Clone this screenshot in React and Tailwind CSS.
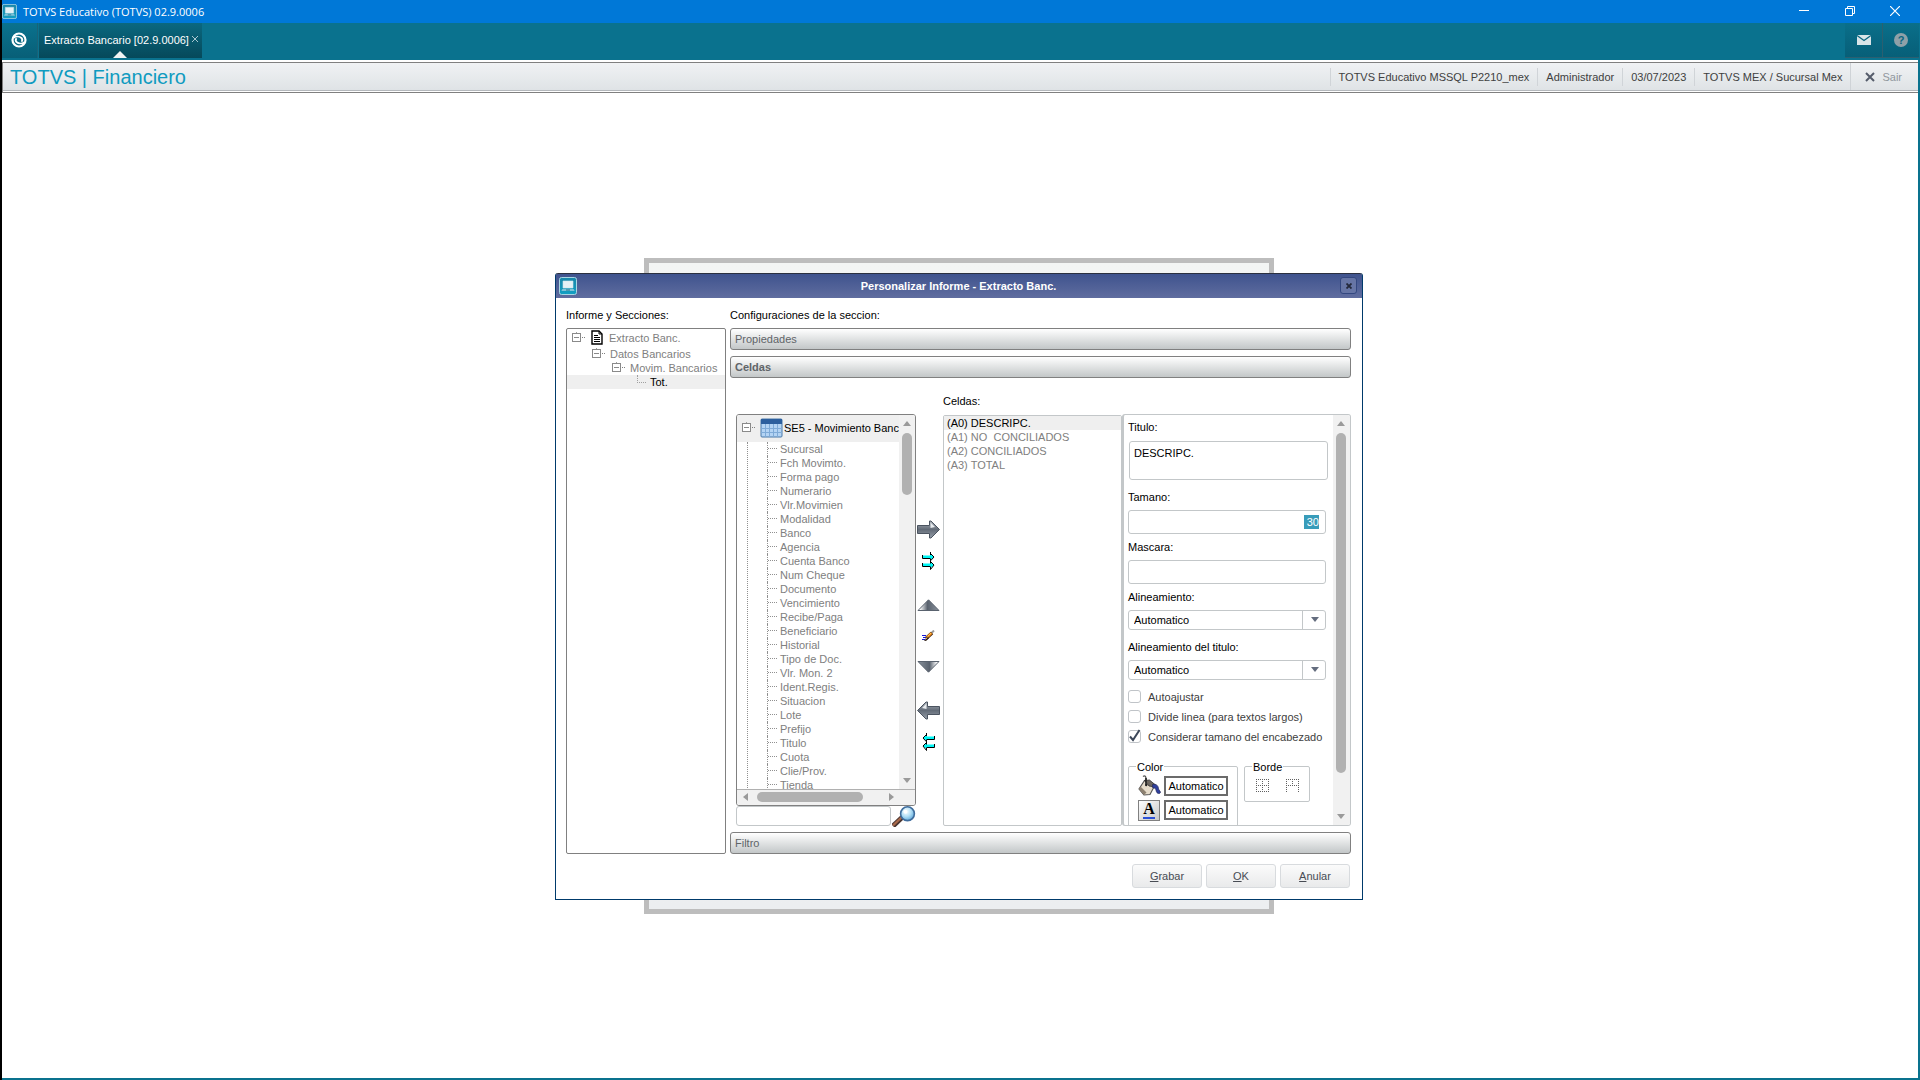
import React, { useState } from 'react'

const FIELDS = [
  'Sucursal', 'Fch Movimto.', 'Forma pago', 'Numerario', 'Vlr.Movimien', 'Modalidad', 'Banco', 'Agencia',
  'Cuenta Banco', 'Num Cheque', 'Documento', 'Vencimiento', 'Recibe/Paga', 'Beneficiario', 'Historial',
  'Tipo de Doc.', 'Vlr. Mon. 2', 'Ident.Regis.', 'Situacion', 'Lote', 'Prefijo', 'Titulo', 'Cuota',
  'Clie/Prov.', 'Tienda',
]

const CELLS = ['(A0) DESCRIPC.', '(A1) NO  CONCILIADOS', '(A2) CONCILIADOS', '(A3) TOTAL']

function AppIcon({ className }) {
  return (
    <svg viewBox="0 0 18 18" className={className} aria-hidden="true">
      <defs>
        <linearGradient id="app-bg" x1="0" y1="0" x2="0" y2="1">
          <stop offset="0" stopColor="#1a86a8" />
          <stop offset="1" stopColor="#12a0c4" />
        </linearGradient>
      </defs>
      <rect x="0.5" y="0.5" width="17" height="17" rx="2" fill="url(#app-bg)" stroke="#a9d6e3" />
      <path d="M4 4h10v7H4z" fill="#e4f1f6" stroke="#cfe6ee" strokeWidth="0.6" />
      <path d="M3.4 12h11.2l1 2H2.4z" fill="#7fc3d8" />
      <path d="M7 13h4" stroke="#0b5f7a" strokeWidth="0.8" />
    </svg>
  )
}

function Expander() {
  return (
    <svg width="14" height="14" viewBox="0 0 14 14" className="shrink-0" shapeRendering="crispEdges" aria-hidden="true">
      <path d="M4.5 1v1" stroke="#a0a0a0" />
      <rect x="0.5" y="2.5" width="8" height="8" fill="#fff" stroke="#8a8a8a" />
      <path d="M2 6.5h5" stroke="#8a8a8a" />
      <path d="M10 6.5h4" stroke="#808080" strokeDasharray="1 1" />
    </svg>
  )
}

function Triangle({ dir, color = '#9a9a9a' }) {
  const shapes = {
    up: 'M0 6h8L4 1z',
    down: 'M0 1h8L4 6z',
    left: 'M6 0v8L1 4z',
    right: 'M1 0v8L6 4z',
  }
  return (
    <svg width="8" height="8" viewBox="0 0 8 8" aria-hidden="true">
      <path d={shapes[dir]} fill={color} />
    </svg>
  )
}

function BigArrow({ flip }) {
  return (
    <svg width="23" height="19" viewBox="0 0 23 19" className={flip ? '-scale-x-100' : ''} aria-hidden="true">
      <defs>
        <linearGradient id="steel" x1="0" y1="0" x2="0" y2="1">
          <stop offset="0" stopColor="#a9b0b8" />
          <stop offset="0.5" stopColor="#626b77" />
          <stop offset="1" stopColor="#949ca6" />
        </linearGradient>
      </defs>
      <path d="M0.5 5.5h12v-4.5h1.5l8.5 8.5-8.5 8.5h-1.5v-4.5h-12z" fill="url(#steel)" stroke="#4b5460" />
      <path d="M13.5 2.5l4.5 4.5-4.5 1z" fill="#e8ebee" />
    </svg>
  )
}

function WideTriangle({ flip }) {
  return (
    <svg width="23" height="12" viewBox="0 0 23 12" className={flip ? 'rotate-180' : ''} aria-hidden="true">
      <defs>
        <linearGradient id="tri" x1="0" y1="0" x2="1" y2="0">
          <stop offset="0.1" stopColor="#ffffff" />
          <stop offset="0.45" stopColor="#59626e" />
          <stop offset="1" stopColor="#8a929c" />
        </linearGradient>
      </defs>
      <path d="M1 11.5L11.5 0.8 22 11.5z" fill="url(#tri)" stroke="#59626e" />
    </svg>
  )
}

function DoubleArrow({ flip }) {
  return (
    <svg width="13" height="18" viewBox="0 0 13 18" className={flip ? '-scale-x-100' : ''} aria-hidden="true">
      <path d="M0 3.500h8V1.500l4 3.500-4 3.500V6H0z" fill="#00f5f5" />
      <path d="M0.500 3v3.500H8M8.500 0v3M8.500 1.500L12 5 8.500 8.800V6.500" fill="none" stroke="#000" />
      <path d="M0 11.500h8v-2l4 3.500-4 3.500V14H0z" fill="#00f5f5" />
      <path d="M0.500 11v3.500H8M8.500 9v2.500M8.500 9.500L12 13l-3.500 4.500v-3" fill="none" stroke="#000" />
    </svg>
  )
}

function Brush() {
  return (
    <svg width="13" height="12" viewBox="0 0 13 12" aria-hidden="true">
      <path d="M9 3.5L12 0.5" stroke="#9a9a9a" strokeWidth="2" />
      <path d="M4 8.5L10 3" stroke="#4a2a10" strokeWidth="3.6" />
      <path d="M4.5 8L9.5 3" stroke="#f08a18" strokeWidth="2.4" />
      <path d="M5 7L9 3" stroke="#ffd060" strokeWidth="0.8" />
      <path d="M0 5.5h4M1 7.5h3M0 9.5h3" stroke="#1616d8" strokeWidth="1" />
      <path d="M2 10.5L5.5 6.5l1.500 1.500-3 3z" fill="#2a1a10" />
      <path d="M3.5 9.5l2-2" stroke="#f0c080" strokeWidth="0.8" />
    </svg>
  )
}

function Magnifier() {
  return (
    <svg width="24" height="21" viewBox="0 0 24 21" aria-hidden="true">
      <defs>
        <radialGradient id="lens" cx="0.4" cy="0.35" r="0.7">
          <stop offset="0" stopColor="#ffffff" />
          <stop offset="0.5" stopColor="#b4e0f6" />
          <stop offset="1" stopColor="#5aa6d8" />
        </radialGradient>
      </defs>
      <path d="M10.5 11L1 20" stroke="#4a3430" strokeWidth="5" />
      <path d="M10 11L1 19.5" stroke="#a86a4c" strokeWidth="2.4" />
      <circle cx="15.5" cy="7.7" r="6.9" fill="url(#lens)" stroke="#3f6c9c" strokeWidth="1.6" />
      <circle cx="13.4" cy="5.8" r="2" fill="#fff" />
    </svg>
  )
}

function Bucket() {
  return (
    <svg width="24" height="22" viewBox="0 0 24 22" aria-hidden="true">
      <path d="M5 1.5c2-1.5 3 0 3 2v6" fill="none" stroke="#555" strokeWidth="1.3" />
      <path d="M6.5 5.5L17 10l-5 9.5-6 0.5L1 14z" fill="#e6dccb" stroke="#555" strokeWidth="1.1" />
      <path d="M6 20L1 14l1.5-2.500 6 6z" fill="#8d8171" />
      <path d="M6.5 5.5l5-0.500 6 5-1 2L11 11z" fill="#6d6760" stroke="#333" strokeWidth="0.8" />
      <path d="M8 3v6.5" stroke="#222" strokeWidth="1.6" />
      <circle cx="8.2" cy="10" r="1.2" fill="#222" />
      <path d="M14.5 9.5c4-1 6 1.500 6 4.500l2 3c0 2-3 2-4 0l-1-3.500-3-1z" fill="#2e3f9e" stroke="#2a2d5a" strokeWidth="0.7" />
    </svg>
  )
}

function BorderGrid({ partial }) {
  return (
    <svg width="13" height="13" viewBox="0 0 13 13" shapeRendering="crispEdges" aria-hidden="true">
      <path
        d={partial ? 'M0 0.5h13M0 6.5h13M0.5 0v13M6.5 0v8M12.5 0v13' : 'M0 0.5h13M0 6.5h13M0 12.5h13M0.5 0v13M6.5 0v13M12.5 0v13'}
        fill="none"
        stroke="#606060"
        strokeDasharray="1 1"
      />
    </svg>
  )
}

function VScroll({ thumb }) {
  return (
    <div className="flex w-4 shrink-0 flex-col items-center bg-[#f1f1f1]">
      <div className="flex h-[18px] items-center"><Triangle dir="up" /></div>
      <div className={`w-[10px] rounded-full bg-[#b1b1b1] ${thumb}`} />
      <div className="mt-auto flex h-4 items-center"><Triangle dir="down" /></div>
    </div>
  )
}

function Bar({ children, bold }) {
  return (
    <button
      className={`h-[22px] w-full shrink-0 rounded-[3px] border border-[#808080] bg-gradient-to-b from-white to-[#c3c7c8] px-1 text-left text-[#606468] ${bold ? 'font-bold' : ''}`}
    >
      {children}
    </button>
  )
}

function Combo({ id, label }) {
  return (
    <div className="mb-[10px]">
      <label htmlFor={id} className="mb-[6px] block">{label}</label>
      <div className="relative h-5 w-[198px]">
        <select id={id} className="h-full w-full appearance-none rounded-[3px] border border-[#c3c7c9] bg-white px-[5px] text-black outline-none">
          <option>Automatico</option>
        </select>
        <span className="pointer-events-none absolute inset-y-0 right-0 flex w-6 items-center justify-center border-l border-[#c3c7c9]">
          <Triangle dir="down" color="#646d7e" />
        </span>
      </div>
    </div>
  )
}

function Check({ label, defaultChecked }) {
  return (
    <label className="flex h-5 items-center gap-[7px] text-[#404040]">
      <span className="relative h-[13px] w-[13px]">
        <input type="checkbox" defaultChecked={defaultChecked} className="peer block h-full w-full appearance-none rounded-[3px] border border-[#c0c4c8] bg-white" />
        <svg viewBox="0 0 13 13" className="pointer-events-none absolute inset-0 hidden overflow-visible peer-checked:block" aria-hidden="true">
          <path d="M2 6.5L5 10 11.5 0" fill="none" stroke="#3c4759" strokeWidth="2" />
        </svg>
      </span>
      {label}
    </label>
  )
}

function TitleBar() {
  return (
    <header className="flex h-[23px] items-center bg-[#0078d7] text-white">
      <AppIcon className="h-[15px] w-[15px]" />
      <h1 className="ml-[6px] font-['Open_Sans',sans-serif] text-[11px]">TOTVS Educativo (TOTVS) 02.9.0006</h1>
      <div className="ml-auto flex h-full pr-[2px] pb-[2px]">
        <button aria-label="Minimizar" className="flex w-[46px] items-center justify-center">
          <svg width="10" height="10" viewBox="0 0 10 10"><path d="M0 4.5h10" stroke="#fff" /></svg>
        </button>
        <button aria-label="Restaurar" className="flex w-[45px] items-center justify-center">
          <svg width="10" height="10" viewBox="0 0 10 10" fill="none" stroke="#fff"><path d="M0.5 2.5h7v7h-7zM2.5 2.5v-2h7v7h-2" /></svg>
        </button>
        <button aria-label="Cerrar" className="flex w-[46px] items-center justify-center">
          <svg width="10" height="10" viewBox="0 0 10 10"><path d="M0 0l10 10M10 0L0 10" stroke="#fff" strokeWidth="1.2" /></svg>
        </button>
      </div>
    </header>
  )
}

function Toolbar() {
  return (
    <nav className="flex h-[37px] bg-[#0a728e] pb-[2px] text-white">
      <button aria-label="Inicio" className="flex w-[36px] items-center justify-center border-r border-[#1a6277] bg-gradient-to-b from-[#0a728e] to-[#085f77] pr-[2px] pb-[2px]">
        <svg width="16" height="16" viewBox="0 0 16 16" fill="none" stroke="#fff" aria-hidden="true">
          <circle cx="8" cy="8" r="6.5" strokeWidth="2.2" />
          <path d="M2.5 5.8C5 4 8.500 4.200 10.500 6c1 1 1 2.500 0 3.800" strokeWidth="1.800" />
          <path d="M13.500 10.200C11 12 7.500 11.800 5.500 10c-1-1-1-2.500 0-3.800" strokeWidth="1.800" />
        </svg>
      </button>
      <div className="relative ml-[1px] flex w-[163px] items-center bg-gradient-to-b from-[#0a6880] to-[#06495a] pb-[2px] pl-[5px]">
        <a href="#extracto">Extracto Bancario [02.9.0006]</a>
        <button aria-label="Cerrar pestaña" className="ml-[3px] pb-[2px]">
          <svg width="6" height="6" viewBox="0 0 6 6"><path d="M0 0l6 6M6 0L0 6" stroke="#a9c8d1" /></svg>
        </button>
        <svg width="14" height="7" viewBox="0 0 14 7" className="absolute bottom-0 left-[74px]" aria-hidden="true">
          <path d="M7 0l7 7H0z" fill="#f2f4f5" />
        </svg>
      </div>
      <div className="ml-auto flex pr-px">
        <button aria-label="Mensajes" className="flex w-[38px] items-center justify-center border-r border-b border-[#2b5f70] bg-gradient-to-b from-[#0a6f8a] to-[#075f78]">
          <svg width="14" height="10" viewBox="0 0 14 10" aria-hidden="true">
            <path d="M0 0h14v10H0z" fill="#d9e4e8" />
            <path d="M0 0.5l7 5 7-5" fill="none" stroke="#0a6680" strokeWidth="1.3" />
          </svg>
        </button>
        <button aria-label="Ayuda" className="flex w-[36px] items-center justify-center border-b border-[#2b5f70] bg-gradient-to-b from-[#0a6f8a] to-[#075f78]">
          <span className="flex h-[14px] w-[14px] items-center justify-center rounded-full bg-[#8fa0a8] font-bold text-[#0a6680]">?</span>
        </button>
      </div>
    </nav>
  )
}

function InfoBar() {
  const info = ['TOTVS Educativo MSSQL P2210_mex', 'Administrador', '03/07/2023', 'TOTVS MEX / Sucursal Mex']
  return (
    <div className="mt-[2px] border border-r-0 border-[#808080] bg-white pb-px">
      <div className="flex h-7 items-center border-b border-[#b4b8bc] bg-gradient-to-b from-[#f0f2f4] to-[#dfe3e6]">
        <h2 className="ml-[7px] text-xl leading-7 text-[#0f9bc0]">TOTVS | Financiero</h2>
        <ul className="ml-auto flex h-[18px] text-[#404040]">
          {info.map((text) => (
            <li key={text} className="flex items-center border-l border-[#d0d4d8] px-2">{text}</li>
          ))}
        </ul>
        <button className="flex h-full items-center gap-[7px] border-l border-[#cfd3d7] pr-4 pl-[14px] text-[#90979e]">
          <svg width="10" height="10" viewBox="0 0 10 10" aria-hidden="true"><path d="M1 1l8 8M9 1L1 9" stroke="#555c6b" strokeWidth="2" /></svg>
          Sair
        </button>
      </div>
    </div>
  )
}

function SectionTree() {
  return (
    <div className="flex w-[160px] flex-col">
      <p className="mb-[6px]">Informe y Secciones:</p>
      <ul className="flex-1 rounded-[2px] border border-[#808080] text-[#808080]">
        <li className="flex h-[18px] items-center pl-[5px]">
          <Expander />
          <svg width="12" height="15" viewBox="0 0 12 15" className="ml-[5px]" aria-hidden="true">
            <path d="M1 1h7l3 3v10H1z" fill="#fff" stroke="#000" strokeWidth="1.4" />
            <path d="M8 1v3h3" fill="none" stroke="#000" />
            <path d="M3 5.5h4M3 7.5h6M3 9.5h6M3 11.5h6" stroke="#000" />
          </svg>
          <span className="ml-[6px]">Extracto Banc.</span>
        </li>
        <li className="flex h-[14px] items-center gap-1 pl-[25px]"><Expander />Datos Bancarios</li>
        <li className="flex h-[14px] items-center gap-1 pl-[45px]"><Expander />Movim. Bancarios</li>
        <li className="flex h-[14px] items-center bg-[#efefef] pl-[70px] text-black">
          <span className="mr-1 mb-[6px] h-[8px] w-[9px] border-b border-l border-dotted border-[#a0a0a0]" />
          Tot.
        </li>
      </ul>
    </div>
  )
}

function FieldTree() {
  return (
    <div className="w-[180px] pt-9">
      <div className="h-[392px] overflow-hidden rounded-[3px] border border-[#808080]">
        <div className="flex h-[374px]">
          <div className="min-w-0 flex-1 overflow-hidden">
            <div className="flex h-[27px] items-center bg-[#efefef] pl-[5px] whitespace-nowrap">
              <Expander />
              <svg width="23" height="20" viewBox="0 0 23 20" className="ml-[4px] shrink-0" aria-hidden="true">
                <rect x="1" y="1" width="21" height="18" rx="1" fill="#b4d4f4" stroke="#4878a8" />
                <rect x="1" y="1" width="21" height="5" fill="#2c5f9e" />
                <path d="M1 10.5h21M1 14.5h21M5.5 6v13M9.5 6v13M13.5 6v13M17.5 6v13" stroke="#7fabd8" />
              </svg>
              <span className="ml-px">SE5 - Movimiento Banc</span>
            </div>
            <ul className="ml-[10px] border-l border-dotted border-[#909090] pl-[19px] text-[#808080]">
              {FIELDS.map((field) => (
                <li key={field} className="flex h-[14px] items-center border-l border-dotted border-[#909090]">
                  <span className="mr-[3px] w-[9px] border-t border-dotted border-[#909090]" />
                  {field}
                </li>
              ))}
            </ul>
          </div>
          <VScroll thumb="h-[62px]" />
        </div>
        <div className="flex h-4 items-center border-t border-[#b0b0b0] bg-[#f1f1f1]">
          <div className="flex w-5 justify-center pr-[2px]"><Triangle dir="left" /></div>
          <div className="h-[10px] w-[106px] rounded-full bg-[#b1b1b1]" />
          <div className="mr-[19px] ml-auto"><Triangle dir="right" /></div>
        </div>
      </div>
      <div className="flex h-5">
        <input aria-label="Buscar campo" className="w-[155px] rounded-[3px] border border-[#c3c7c9] px-1 outline-none" />
        <button aria-label="Buscar" className="ml-[1px]"><Magnifier /></button>
      </div>
    </div>
  )
}

function MoveButtons() {
  const groups = [
    [['Agregar', <BigArrow />], ['Agregar todos', <DoubleArrow />]],
    [['Subir', <WideTriangle />], ['Limpiar', <Brush />], ['Bajar', <WideTriangle flip />]],
    [['Quitar', <BigArrow flip />], ['Quitar todos', <DoubleArrow flip />]],
  ]
  return (
    <div className="flex w-[27px] flex-col gap-[14px] pt-[137px] pr-[2px]">
      {groups.map((group, i) => (
        <div key={i} className="flex flex-col gap-px">
          {group.map(([label, icon]) => (
            <button key={label} aria-label={label} className="flex h-[30px] items-center justify-center">{icon}</button>
          ))}
        </div>
      ))}
    </div>
  )
}

function CellList() {
  const [current, setCurrent] = useState(0)
  return (
    <div className="flex w-[179px] flex-col pt-4">
      <p className="mb-[7px]">Celdas:</p>
      <ul className="flex-1 rounded-[2px] border border-[#c3c7c9]">
        {CELLS.map((cell, i) => (
          <li key={cell}>
            <button
              onClick={() => setCurrent(i)}
              className={`block w-full px-[3px] text-left whitespace-pre ${i === current ? 'bg-[#efefef] text-black' : 'text-[#808080]'}`}
            >
              {cell}
            </button>
          </li>
        ))}
      </ul>
    </div>
  )
}

function CellForm() {
  return (
    <div className="flex-1 pt-9">
      <div className="flex h-[412px] overflow-hidden rounded-[3px] border border-l-2 border-[#c3c7c9]">
        <form className="min-w-0 flex-1 pt-[5px] pl-1">
          <label htmlFor="titulo" className="mb-[7px] block">Titulo:</label>
          <textarea id="titulo" defaultValue="DESCRIPC." className="mb-[10px] ml-px block h-[39px] w-[199px] resize-none rounded-[3px] border border-[#c3c7c9] px-1 py-[4px] outline-none" />

          <label htmlFor="tamano" className="mb-[6px] block">Tamano:</label>
          <div className="mb-[6px] flex h-6 w-[198px] items-center justify-end rounded-[3px] border border-[#c3c7c9] pr-[6px]">
            <input id="tamano" defaultValue="30" className="h-[14px] w-[15px] bg-[#389cba] text-right text-white outline-none" />
          </div>

          <label htmlFor="mascara" className="mb-[6px] block">Mascara:</label>
          <input id="mascara" className="mb-[6px] block h-6 w-[198px] rounded-[3px] border border-[#c3c7c9] px-1 outline-none" />

          <Combo id="alineamiento" label="Alineamiento:" />
          <Combo id="alineamiento-titulo" label="Alineamiento del titulo:" />

          <div className="-mt-[3px]">
            <Check label="Autoajustar" />
            <Check label="Divide linea (para textos largos)" />
            <Check label="Considerar tamano del encabezado" defaultChecked />
          </div>

          <div className="mt-[13px] flex items-start gap-[6px]">
            <fieldset className="w-[110px] rounded-[2px] border border-[#c3c7c9] pb-4 pl-[9px]">
              <legend className="-ml-[2px] px-px">Color</legend>
              <div className="grid grid-cols-[26px_64px] items-center gap-y-[3px] pt-px">
                <Bucket />
                <button type="button" className="h-5 border-2 border-[#6b6b6b] bg-white">Automatico</button>
                <span className="flex h-[21px] w-[22px] flex-col items-center border border-[#808080] bg-gradient-to-br from-white to-[#c8c8c8] font-['Liberation_Serif',serif] text-base leading-4 font-bold">
                  A
                  <span className="h-[2px] w-3 bg-[#2b50d8]" />
                </span>
                <button type="button" className="h-5 border-2 border-[#6b6b6b] bg-white">Automatico</button>
              </div>
            </fieldset>
            <fieldset className="w-[66px] rounded-[2px] border border-[#c3c7c9] pb-[9px] pl-[11px]">
              <legend className="-ml-[4px] px-px">Borde</legend>
              <div className="flex gap-[17px] pt-[5px]">
                <button type="button" aria-label="Todos los bordes"><BorderGrid /></button>
                <button type="button" aria-label="Borde superior"><BorderGrid partial /></button>
              </div>
            </fieldset>
          </div>
        </form>
        <VScroll thumb="h-[340px]" />
        <div className="w-px bg-[#f1f1f1]" />
      </div>
    </div>
  )
}

function FooterButton({ first, rest }) {
  return (
    <button className="h-6 w-[70px] rounded-[3px] border border-[#d8dbde] bg-gradient-to-b from-[#fbfbfb] to-[#e9eaeb] text-[#484c54]">
      <u>{first}</u>{rest}
    </button>
  )
}

function Dialog() {
  return (
    <section role="dialog" aria-label="Personalizar Informe" className="z-10 col-start-1 row-start-1 w-[808px] max-w-full rounded-t-[3px] border border-t-0 border-[#003a6b] bg-white">
      <div className="flex h-[25px] items-center rounded-t-[2px] border-t border-[#2b3040] bg-gradient-to-b from-[#3f538e] to-[#606d9f] px-[3px]">
        <AppIcon className="h-[18px] w-[18px]" />
        <h3 className="flex-1 text-center font-bold text-white">Personalizar Informe - Extracto Banc.</h3>
        <button aria-label="Cerrar" className="mr-[2px] flex h-[17px] w-[17px] items-center justify-center rounded-[3px] border border-[#33477f] bg-[#6675a5]">
          <svg width="6" height="6" viewBox="0 0 6 6"><path d="M0.5 0.5l5 5M5.5 0.5l-5 5" stroke="#23283a" strokeWidth="1.8" /></svg>
        </button>
      </div>
      <div className="px-[10px] pt-[10px] pb-[11px]">
        <div className="flex gap-1">
          <SectionTree />
          <div className="flex min-w-0 flex-1 flex-col pr-px">
            <p className="mb-[6px]">Configuraciones de la seccion:</p>
            <Bar>Propiedades</Bar>
            <div className="h-[6px]" />
            <Bar bold>Celdas</Bar>
            <div className="flex pb-[6px] pl-[6px]">
              <FieldTree />
              <MoveButtons />
              <CellList />
              <CellForm />
            </div>
            <Bar>Filtro</Bar>
          </div>
        </div>
        <div className="mt-[10px] flex justify-end gap-1 pr-[2px]">
          <FooterButton first="G" rest="rabar" />
          <FooterButton first="O" rest="K" />
          <FooterButton first="A" rest="nular" />
        </div>
      </div>
    </section>
  )
}

export default function App() {
  return (
    <div className="flex min-h-screen flex-col border-l-2 border-black bg-white font-['Liberation_Sans',Arial,sans-serif] text-[11px] leading-[14px] text-black">
      <TitleBar />
      <Toolbar />
      <div className="flex flex-1 flex-col border-r-2 border-b-2 border-[#0a728e]">
        <InfoBar />
        <main className="grid flex-1 place-content-center place-items-center pt-px pr-[2px]">
          <div className="col-start-1 row-start-1 h-[656px] w-[630px] border-[5px] border-[#bdbdbd] bg-gradient-to-b from-[#f3f5f4] to-[#eceef0]" />
          <Dialog />
        </main>
      </div>
    </div>
  )
}
